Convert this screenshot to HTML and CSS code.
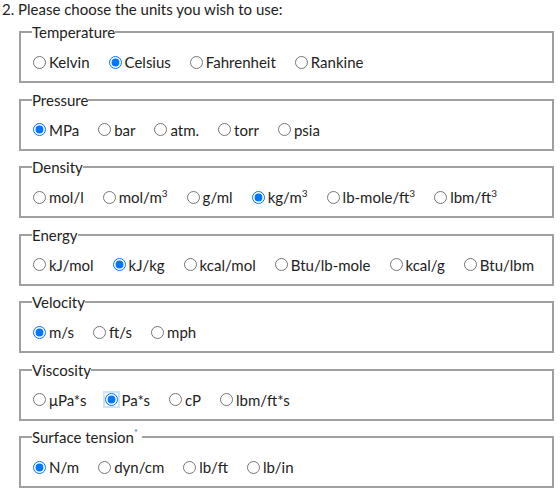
FILE: index.html
```html
<!DOCTYPE html>
<html>
<head>
<meta charset="utf-8">
<link rel="stylesheet" href="styles.css">
</head>
<body>
<div class="question">2. Please choose the units you wish to use:</div>
<div class="groups">
  <fieldset class="group">
    <legend>Temperature</legend>
    <div class="opts">
      <label class="opt"><input type="radio" name="t"><span>Kelvin</span></label>
      <label class="opt"><input type="radio" name="t" checked><span>Celsius</span></label>
      <label class="opt"><input type="radio" name="t"><span>Fahrenheit</span></label>
      <label class="opt"><input type="radio" name="t"><span>Rankine</span></label>
    </div>
  </fieldset>
  <fieldset class="group">
    <legend>Pressure</legend>
    <div class="opts">
      <label class="opt"><input type="radio" name="p" checked><span>MPa</span></label>
      <label class="opt"><input type="radio" name="p"><span>bar</span></label>
      <label class="opt"><input type="radio" name="p"><span>atm.</span></label>
      <label class="opt"><input type="radio" name="p"><span>torr</span></label>
      <label class="opt"><input type="radio" name="p"><span>psia</span></label>
    </div>
  </fieldset>
  <fieldset class="group">
    <legend>Density</legend>
    <div class="opts">
      <label class="opt"><input type="radio" name="d"><span>mol/l</span></label>
      <label class="opt"><input type="radio" name="d"><span>mol/m<sup>3</sup></span></label>
      <label class="opt"><input type="radio" name="d"><span>g/ml</span></label>
      <label class="opt"><input type="radio" name="d" checked><span>kg/m<sup>3</sup></span></label>
      <label class="opt"><input type="radio" name="d"><span>lb-mole/ft<sup>3</sup></span></label>
      <label class="opt"><input type="radio" name="d"><span>lbm/ft<sup>3</sup></span></label>
    </div>
  </fieldset>
  <fieldset class="group">
    <legend>Energy</legend>
    <div class="opts">
      <label class="opt"><input type="radio" name="e"><span>kJ/mol</span></label>
      <label class="opt"><input type="radio" name="e" checked><span>kJ/kg</span></label>
      <label class="opt"><input type="radio" name="e"><span>kcal/mol</span></label>
      <label class="opt"><input type="radio" name="e"><span>Btu/lb-mole</span></label>
      <label class="opt"><input type="radio" name="e"><span>kcal/g</span></label>
      <label class="opt"><input type="radio" name="e"><span>Btu/lbm</span></label>
    </div>
  </fieldset>
  <fieldset class="group">
    <legend>Velocity</legend>
    <div class="opts">
      <label class="opt"><input type="radio" name="v" checked><span>m/s</span></label>
      <label class="opt"><input type="radio" name="v"><span>ft/s</span></label>
      <label class="opt"><input type="radio" name="v"><span>mph</span></label>
    </div>
  </fieldset>
  <fieldset class="group">
    <legend>Viscosity</legend>
    <div class="opts">
      <label class="opt"><input type="radio" name="vi"><span>μPa*s</span></label>
      <label class="opt"><input type="radio" name="vi" class="focused" checked><span>Pa*s</span></label>
      <label class="opt"><input type="radio" name="vi"><span>cP</span></label>
      <label class="opt"><input type="radio" name="vi"><span>lbm/ft*s</span></label>
    </div>
  </fieldset>
  <fieldset class="group">
    <legend>Surface tension<sup class="note">*</sup>&nbsp;</legend>
    <div class="opts">
      <label class="opt"><input type="radio" name="s" checked><span>N/m</span></label>
      <label class="opt"><input type="radio" name="s"><span>dyn/cm</span></label>
      <label class="opt"><input type="radio" name="s"><span>lb/ft</span></label>
      <label class="opt"><input type="radio" name="s"><span>lb/in</span></label>
    </div>
  </fieldset>
</div>
</body>
</html>
```

FILE: styles.css
```css
html, body {
  margin: 0;
  padding: 0;
  background: #fff;
}
body {
  font-family: "Source Sans Pro", Lato, "Noto Sans", sans-serif;
  font-size: 15px;
  color: #222;
}
.question {
  padding: 0 0 0 2px;
  line-height: 19px;
  color: #222;
}
.groups {
  display: flex;
  flex-direction: column;
  gap: 8.5px;
  padding: 5px 6px 0 19px;
}
.group {
  margin: 0;
  border: 2px solid #a0a0a0;
  padding: 12px 10px 9px 11px;
}
.group legend {
  padding: 0;
  margin-left: 0;
  line-height: 16px;
  color: #222;
}
.note {
  color: #1a73e8;
  font-size: 9px;
  vertical-align: 7px;
  line-height: 0;
}
.opts {
  display: flex;
  flex-wrap: nowrap;
  gap: 18px;
  align-items: center;
  line-height: 20px;
}
.opt {
  display: flex;
  align-items: center;
  white-space: nowrap;
}
.opt input {
  margin: 0 3px 0 1px;
  width: 13px;
  height: 13px;
}
.opt sup {
  font-size: 10px;
  line-height: 0;
  vertical-align: 6px;
}
.focused {
  outline: none;
  box-shadow: 0 0 0 2px #cfe3fb;
  border-radius: 50%;
}
```
